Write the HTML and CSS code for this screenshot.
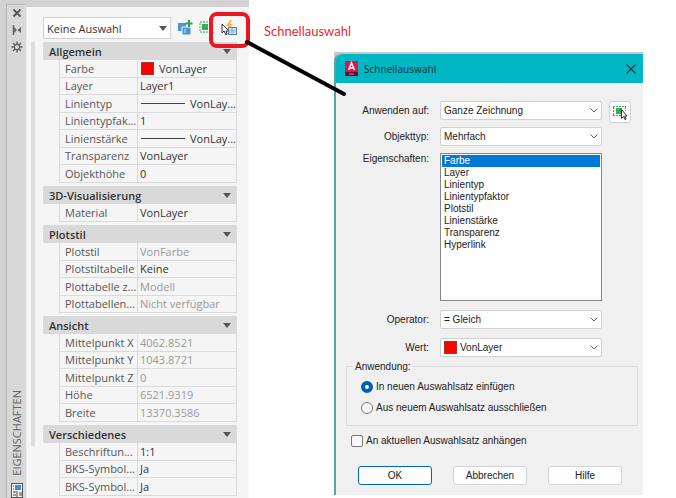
FILE: index.html
```html
<!DOCTYPE html>
<html lang="de">
<head>
<meta charset="utf-8">
<title>Schnellauswahl</title>
<link rel="stylesheet" href="styles.css">
</head>
<body>
<main class="stage">
  <section class="palette" aria-label="Eigenschaften">
    <div class="rail">
      <button class="rail-button" aria-label="Schließen"><svg width="10" height="10" viewBox="0 0 10 10"><path d="M1.500 1.500l7 7M8.500 1.500l-7 7" stroke="#555" stroke-width="1.800"/></svg></button>
      <button class="rail-button" aria-label="Automatisch ausblenden"><svg width="10" height="10" viewBox="0 0 10 10"><path d="M1.500 0v10" stroke="#666" stroke-width="1.500"/><path d="M2 2l3 3-3 3zM9 2L5.500 5 9 8z" fill="#666"/></svg></button>
      <button class="rail-button" aria-label="Einstellungen"><svg width="12" height="12" viewBox="0 0 12 12"><g stroke="#666" fill="none"><circle cx="6" cy="6" r="2.700" stroke-width="1.400"/><path d="M6 .5v2.500M6 9v2.500M.5 6H3M9 6h2.500M2 2l2 2M8 8l2 2M10 2L8 4M4 8l-2 2" stroke-width="1.500"/></g></svg></button>
      <span class="rail-title">EIGENSCHAFTEN</span>
      <svg class="rail-logo" width="12" height="15" viewBox="0 0 12 15"><rect x=".5" y=".5" width="11" height="14" fill="#f4f4f4" stroke="#555"/><path d="M4 2h6v5H4z" fill="#3d8fd1"/><path d="M2 3h1M2 6h1M2 9h3M2 12h3M6 8v6M8 10h3M8 12h3" stroke="#444"/></svg>
    </div>
    <div class="palette-body">
      <div class="scroll-track"></div>
      <div class="palette-content">
        <div class="toolbar">
          <div class="combo combo-palette">
            <select aria-label="Auswahl"><option>Keine Auswahl</option></select>
            <svg class="combo-arrow" width="8" height="5" viewBox="0 0 8 5"><path d="M0 0h8L4 5z" fill="#555"/></svg>
          </div>
          <button class="tool" aria-label="Zur Auswahl hinzufügen"><svg width="16" height="16" viewBox="0 0 16 16"><path d="M1 3h8v8H1z" fill="#4b95d3"/><path d="M5 7h9v8H5z" fill="#4b95d3" stroke="#f5f5f5"/><path d="M7 9h2v4H7z" fill="#8dbde5"/><path d="M12 0v7M8.500 3.500h7" stroke="#25a552" stroke-width="2"/></svg></button>
          <button class="tool" aria-label="Objekte wählen"><svg width="16" height="16" viewBox="0 0 16 16"><path d="M1 2h11v10H1z" fill="none" stroke="#35ad5c" stroke-dasharray="2 1"/><path d="M3 4h6v6H3z" fill="#35ad5c"/><path d="M13 10v4l1-1 1 1z" fill="#222"/></svg></button>
          <button class="tool" aria-label="Schnellauswahl"><svg width="17" height="16" viewBox="0 0 17 16"><path d="M9 0L5 6h3L7 9l5-5H9l2-4z" fill="#fbb830"/><path d="M1 4v9l2-2 2 4 1-1-1-3h3z" fill="#fff" stroke="#333"/><path d="M7.500 7.500h8v7h-8z" fill="#fff" stroke="#4a7296"/><path d="M8 10h8M8 12h8M11 8v6" stroke="#6ba1cf"/></svg></button>
        </div>
        <section class="group">
          <button class="group-head"><span>Allgemein</span><svg width="8" height="5" viewBox="0 0 8 5"><path d="M0 0h8L4 5z" fill="#555"/></svg></button>
          <table class="props">
            <tr><th>Farbe</th><td><span class="value"><i class="swatch"></i>VonLayer</span></td></tr>
            <tr><th>Layer</th><td>Layer1</td></tr>
            <tr><th>Linientyp</th><td><span class="value"><i class="line"></i>VonLay...</span></td></tr>
            <tr><th>Linientypfak...</th><td>1</td></tr>
            <tr><th>Linienstärke</th><td><span class="value"><i class="line"></i>VonLay...</span></td></tr>
            <tr><th>Transparenz</th><td>VonLayer</td></tr>
            <tr><th>Objekthöhe</th><td>0</td></tr>
          </table>
        </section>
        <section class="group">
          <button class="group-head"><span>3D-Visualisierung</span><svg width="8" height="5" viewBox="0 0 8 5"><path d="M0 0h8L4 5z" fill="#555"/></svg></button>
          <table class="props">
            <tr><th>Material</th><td>VonLayer</td></tr>
          </table>
        </section>
        <section class="group">
          <button class="group-head"><span>Plotstil</span><svg width="8" height="5" viewBox="0 0 8 5"><path d="M0 0h8L4 5z" fill="#555"/></svg></button>
          <table class="props">
            <tr><th>Plotstil</th><td class="muted">VonFarbe</td></tr>
            <tr><th>Plotstiltabelle</th><td>Keine</td></tr>
            <tr><th>Plottabelle z...</th><td class="muted">Modell</td></tr>
            <tr><th>Plottabellen...</th><td class="muted">Nicht verfügbar</td></tr>
          </table>
        </section>
        <section class="group">
          <button class="group-head"><span>Ansicht</span><svg width="8" height="5" viewBox="0 0 8 5"><path d="M0 0h8L4 5z" fill="#555"/></svg></button>
          <table class="props">
            <tr><th>Mittelpunkt X</th><td class="muted">4062.8521</td></tr>
            <tr><th>Mittelpunkt Y</th><td class="muted">1043.8721</td></tr>
            <tr><th>Mittelpunkt Z</th><td class="muted">0</td></tr>
            <tr><th>Höhe</th><td class="muted">6521.9319</td></tr>
            <tr><th>Breite</th><td class="muted">13370.3586</td></tr>
          </table>
        </section>
        <section class="group">
          <button class="group-head"><span>Verschiedenes</span><svg width="8" height="5" viewBox="0 0 8 5"><path d="M0 0h8L4 5z" fill="#555"/></svg></button>
          <table class="props">
            <tr><th>Beschriftun...</th><td>1:1</td></tr>
            <tr><th>BKS-Symbol...</th><td>Ja</td></tr>
            <tr><th>BKS-Symbol...</th><td>Ja</td></tr>
          </table>
        </section>
      </div>
    </div>
  </section>

  <p class="callout">Schnellauswahl</p>

  <section class="dialog-frame">
    <form class="dialog" aria-label="Schnellauswahl">
      <header class="titlebar">
        <svg width="13" height="15" viewBox="0 0 13 15"><rect width="13" height="15" rx="1" fill="#e0144c"/><path d="M0 11h13v3a1 1 0 0 1-1 1H1a1 1 0 0 1-1-1z" fill="#6d0a2a"/><path d="M3.500 9L6.500 2l3 7M4.500 7h4" fill="none" stroke="#fff" stroke-width="1.500"/><path d="M4 13h5" stroke="#d58ca2"/></svg>
        <h1>Schnellauswahl</h1>
        <button type="button" class="close" aria-label="Dialog schließen"><svg width="10" height="10" viewBox="0 0 10 10"><path d="M.5.5l9 9M9.500.5l-9 9" stroke="#16393c" stroke-width="1.200"/></svg></button>
      </header>
      <div class="fields">
        <label for="scope">Anwenden auf:</label>
        <div class="combo"><select id="scope"><option>Ganze Zeichnung</option></select><svg class="combo-arrow" width="8" height="5" viewBox="0 0 8 5"><path d="M.5.5L4 4 7.500.5" fill="none" stroke="#666"/></svg></div>
        <button type="button" class="pick" aria-label="Objekte wählen"><svg width="16" height="16" viewBox="0 0 16 16"><path d="M1 2.500h13M1 11.500h8M1.500 3v8M13.500 3v4" fill="none" stroke="#35ad5c" stroke-dasharray="2 1"/><path d="M4 4h6v6H4z" fill="#35ad5c"/><path d="M9.500 5.500v9l2-2 1.500 3 1-.5-1.300-3H15z" fill="#fff" stroke="#333"/></svg></button>

        <label for="type">Objekttyp:</label>
        <div class="combo"><select id="type"><option>Mehrfach</option></select><svg class="combo-arrow" width="8" height="5" viewBox="0 0 8 5"><path d="M.5.5L4 4 7.500.5" fill="none" stroke="#666"/></svg></div>

        <label for="properties" class="label-top">Eigenschaften:</label>
        <select id="properties" class="listbox" size="12">
          <option selected>Farbe</option>
          <option>Layer</option>
          <option>Linientyp</option>
          <option>Linientypfaktor</option>
          <option>Plotstil</option>
          <option>Linienstärke</option>
          <option>Transparenz</option>
          <option>Hyperlink</option>
        </select>

        <label for="operator" class="spaced">Operator:</label>
        <div class="combo spaced"><select id="operator"><option>= Gleich</option></select><svg class="combo-arrow" width="8" height="5" viewBox="0 0 8 5"><path d="M.5.5L4 4 7.500.5" fill="none" stroke="#666"/></svg></div>

        <label for="value" class="spaced">Wert:</label>
        <div class="combo combo-color spaced"><select id="value"><option>VonLayer</option></select><i class="swatch"></i><svg class="combo-arrow" width="8" height="5" viewBox="0 0 8 5"><path d="M.5.5L4 4 7.500.5" fill="none" stroke="#666"/></svg></div>
      </div>
      <fieldset class="mode">
        <legend>Anwendung:</legend>
        <label class="choice"><input type="radio" name="mode" checked>In neuen Auswahlsatz einfügen</label>
        <label class="choice"><input type="radio" name="mode">Aus neuem Auswahlsatz ausschließen</label>
      </fieldset>
      <label class="choice append"><input type="checkbox">An aktuellen Auswahlsatz anhängen</label>
      <footer class="actions">
        <button type="submit" class="primary">OK</button>
        <button type="button">Abbrechen</button>
        <button type="button">Hilfe</button>
      </footer>
    </form>
  </section>

  <svg class="marker" width="360" height="110" viewBox="0 0 360 110" aria-hidden="true">
    <rect x="211" y="14" width="37" height="32" rx="6" fill="none" stroke="#e81822" stroke-width="4"/>
    <path d="M247 42L344 94" stroke="#000" stroke-width="4" stroke-linecap="round"/>
  </svg>
</main>
</body>
</html>
```
FILE: styles.css
```css
* {
  box-sizing: border-box;
}

body {
  margin: 0;
  background: #fff;
  font-family: "Liberation Sans", sans-serif;
  font-size: 10px;
  color: #222;
}

button,
select,
input {
  margin: 0;
  font: inherit;
  color: inherit;
}

button {
  display: flex;
  align-items: center;
  justify-content: center;
  padding: 0;
  border: 0;
  background: none;
}

svg {
  display: block;
  flex: none;
}

.stage {
  position: relative;
  display: grid;
  grid-template-columns: minmax(0, 249fr) minmax(0, 85fr) minmax(0, 309fr) minmax(0, 33fr);
  align-items: start;
  min-height: 100vh;
}

/* Properties palette */

.palette {
  display: flex;
  align-self: stretch;
  padding-top: 4px;
  background: #d2d2d2;
  font-family: "Open Sans", sans-serif;
  font-size: 11px;
  color: #333;
}

.rail {
  display: flex;
  flex-direction: column;
  align-items: center;
  gap: 7px;
  width: 20px;
  margin-left: 6px;
  padding: 3px 0 2px;
  border-left: 1px solid #b4b4b4;
  border-top: 1px solid #bbb;
  background: #d8d8d8;
}

.rail-button {
  width: 12px;
  height: 10px;
}

.rail-title {
  margin-top: auto;
  writing-mode: vertical-rl;
  transform: rotate(180deg);
  line-height: 14px;
  color: #666;
}

.palette-body {
  display: flex;
  flex: 1;
  min-width: 0;
  margin-top: 3px;
  border-bottom: 1px solid #bbb;
  border-left: 1px solid #eee;
  background: #f5f5f5;
}

.scroll-track {
  width: 4px;
  margin: 35px 0 53px 4px;
  background: #dedede;
}

.palette-content {
  flex: 1;
  min-width: 0;
  padding: 10px 12px 0 8px;
}

.toolbar {
  display: flex;
  align-items: center;
  gap: 6px;
  margin-bottom: 3px;
}

.combo {
  display: grid;
  align-items: center;
  min-width: 0;
}

.combo > * {
  grid-area: 1 / 1;
}

.combo select {
  width: 100%;
  height: 19px;
  padding: 0 3px;
  border: 1px solid #d0d0d0;
  border-radius: 2px;
  background: #fff;
  appearance: none;
}

.combo-arrow {
  justify-self: end;
  margin-right: 4px;
  pointer-events: none;
}

.combo-palette {
  flex: 1;
}

.combo-palette select {
  height: 22px;
  border-radius: 0;
}

.tool {
  width: 16px;
  height: 16px;
}

.group {
  margin-bottom: 3px;
}

.group-head {
  justify-content: space-between;
  width: 100%;
  height: 18px;
  padding: 0 6px;
  background: #d9d9d9;
  font-weight: 600;
  color: #333;
}

.props {
  width: calc(100% - 16px);
  margin-left: 16px;
  border-spacing: 0;
  table-layout: fixed;
  line-height: 16px;
}

.props th,
.props td {
  height: 18px;
  padding: 0 0 0 2px;
  border-right: 1px solid #dadada;
  border-bottom: 1px solid #dadada;
  font-weight: 400;
  text-align: left;
  white-space: nowrap;
}

.props tr:nth-child(even) > * {
  height: 17px;
}

.props th {
  width: 79px;
  padding-left: 5px;
  border-left: 1px solid #dadada;
  color: #555;
}

.props .muted {
  color: #999;
}

.value {
  display: flex;
  align-items: center;
  gap: 5px;
  padding-left: 1px;
}

.swatch {
  width: 13px;
  height: 13px;
  border: 1px solid #a33;
  background: #f00;
}

.line {
  width: 44px;
  height: 1px;
  background: #444;
}

/* Quick select dialog */

.callout {
  margin: 22px 0 0 15px;
  font-family: Lato, sans-serif;
  font-size: 13px;
  line-height: 18px;
  color: #e32a32;
}

.dialog-frame {
  margin-top: 52px;
  background: #c8c8c8;
}

.dialog {
  display: flex;
  flex-direction: column;
  margin-top: 2px;
  padding-bottom: 10px;
  border-left: 2px solid #57a5a8;
  border-top-left-radius: 7px;
  background: #f0f0f0;
}

.titlebar {
  display: flex;
  align-items: center;
  gap: 6px;
  height: 29px;
  padding: 0 7px 0 9px;
  border-top-left-radius: 6px;
  background: #00b7c3;
}

.titlebar h1 {
  margin: 0;
  font-family: "Noto Sans", sans-serif;
  font-size: 10px;
  font-weight: 400;
  color: #12383b;
}

.close {
  margin-left: auto;
}

.fields {
  display: grid;
  grid-template-columns: 94px 1fr 22px;
  gap: 7px;
  padding: 18px 12px 0 0;
}

.fields > label {
  grid-column: 1;
  align-self: center;
  padding-right: 1px;
  text-align: right;
}

.fields > .combo,
.listbox {
  grid-column: 2;
  margin-left: 3px;
}

.fields > .label-top {
  align-self: start;
}

.fields > .spaced {
  margin-top: 2px;
}

.pick {
  height: 22px;
  margin-bottom: -3px;
  border: 1px solid #d0d0d0;
  border-radius: 3px;
  background: #fff;
}

.listbox {
  height: 148px;
  padding: 1px;
  border: 1px solid #828790;
  border-radius: 0;
  background: #fff;
  overflow: hidden;
}

.listbox option {
  height: 12px;
  min-height: 12px;
  padding: 0 2px;
  line-height: 12px;
}

.listbox option:checked {
  background: #0078d7 linear-gradient(#0078d7, #0078d7);
  color: #fff;
}

.combo-color select {
  padding-left: 19px;
}

.combo-color .swatch {
  margin-left: 4px;
  pointer-events: none;
}

.mode {
  display: flex;
  flex-direction: column;
  gap: 7px;
  min-width: 0;
  margin: 4px 5px 0 10px;
  padding: 8px 14px 10px;
  border: 1px solid #dcdcdc;
}

.mode legend {
  margin-left: -8px;
  padding: 0 2px;
}

.choice {
  display: flex;
  align-items: center;
  gap: 3px;
  line-height: 14px;
}

.choice input {
  width: 12px;
  height: 12px;
  border: 1px solid #777;
  border-radius: 2px;
  background: #f8f8f8;
  appearance: none;
}

.choice input[type="radio"] {
  border-radius: 50%;
}

.choice input[type="radio"]:checked {
  border: 4px solid #005fb8;
  background: #fff;
}

.append {
  margin: 8px 0 0 15px;
}

.actions {
  display: grid;
  grid-template-columns: repeat(3, 1fr);
  gap: 21px;
  margin: 18px 21px 0 22px;
}

.actions button {
  height: 19px;
  border: 1px solid #d4d4d4;
  border-radius: 3px;
  background: #fdfdfd;
}

.actions .primary {
  border-color: #0067c0;
}

/* Pointer from the toolbar button to the dialog */

.marker {
  position: absolute;
  top: 0;
  left: 0;
  pointer-events: none;
}
```
